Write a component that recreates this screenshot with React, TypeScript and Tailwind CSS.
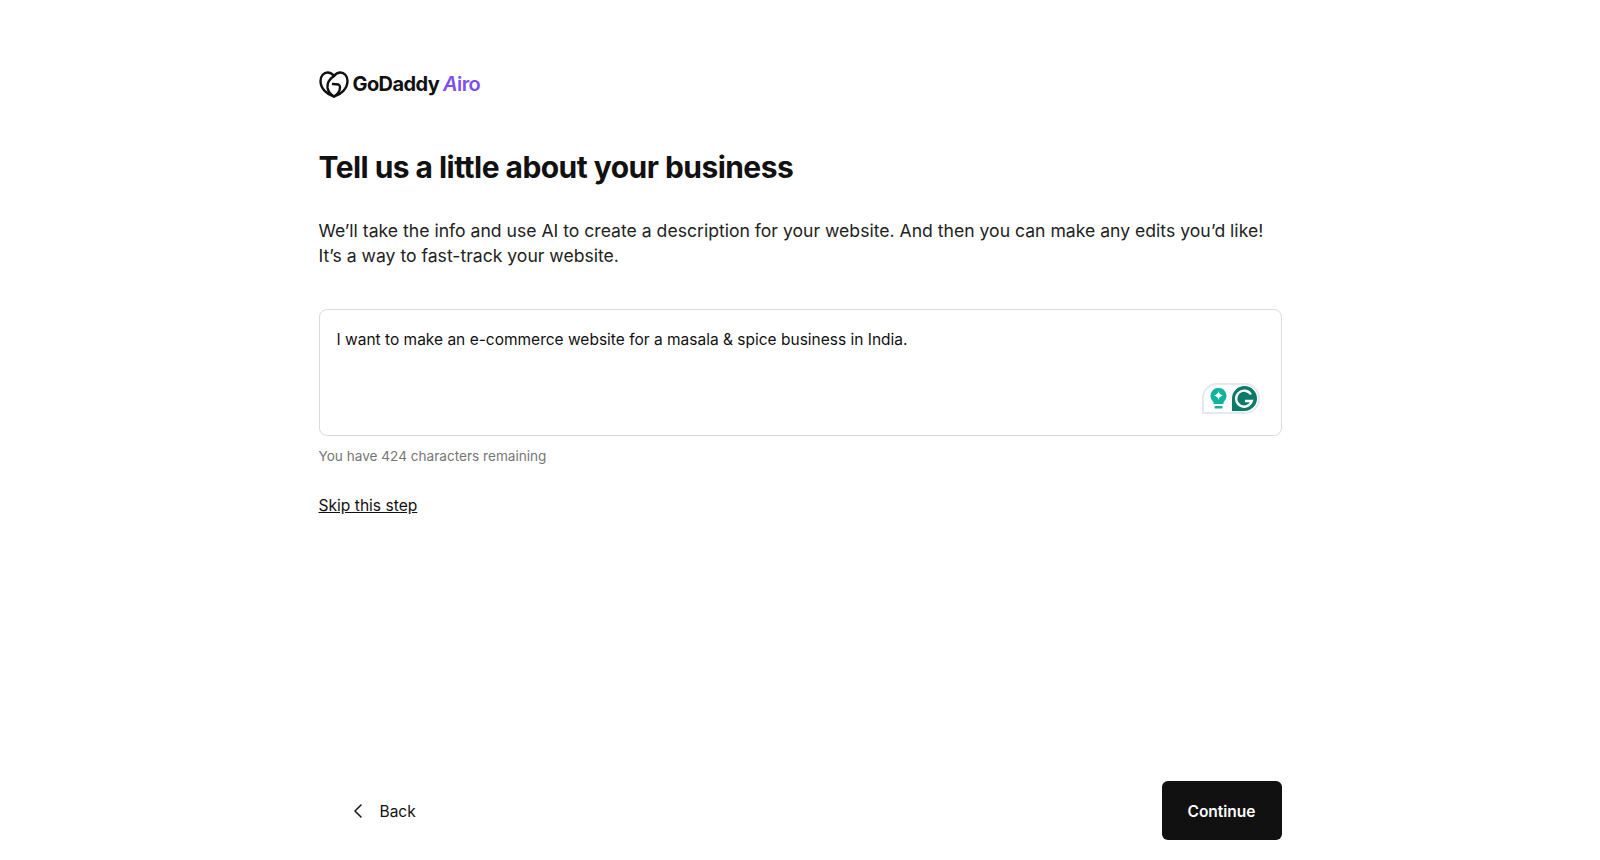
import { ChevronLeft } from "lucide-react";

function HeartLogo() {
  return (
    <svg width="30" height="27" viewBox="0 0 30 27" fill="none" stroke="#111" strokeWidth="2.4" strokeLinecap="round" strokeLinejoin="round">
      <path d="M15 25.5C8 23.5 1.5 17.5 1.5 10C1.5 4.5 5 1.5 8.5 1.5C11.5 1.5 13.5 3 15 5C16.5 3 18.5 1.5 21.5 1.5C25 1.5 28.5 4.5 28.5 10C28.5 17.5 22 23.5 15 25.5Z" />
      <path d="M15 5C10.5 8 8 12 8.5 16.5C9 20 11.5 23.5 15 25.5C18.5 23.5 21 20 21 16C21 15 20.5 14 19.5 13.5L14 13" />
    </svg>
  );
}

function GrammarlyBadge() {
  return (
    <div className="flex h-[31px] w-[58px] items-center justify-between rounded-[15px] rounded-bl-none border-2 border-[#e6e8f0] pl-[6px] pr-[1px]">
      <svg width="17" height="22" viewBox="0 0 16 22">
        <path d="M8 0a8 8 0 0 1 5 14.2V16H3v-1.8A8 8 0 0 1 8 0Z" fill="#10b39b" />
        <path d="M8 3c.5 2.600 1.400 3.500 4.500 4.500C9.400 8.500 8.500 9.400 8 12c-.5-2.600-1.400-3.500-4.500-4.500C6.600 6.500 7.500 5.600 8 3Z" fill="#fff" />
        <rect x="4" y="18" width="8" height="2.500" rx="1" fill="#10b39b" />
      </svg>
      <svg width="25" height="25" viewBox="0 0 25 25">
        <path d="M12.500 0a12.500 12.500 0 0 1 0 25H0V12.500A12.500 12.500 0 0 1 12.500 0Z" fill="#0b7a68" />
        <path d="M19 8.500a8 8 0 1 0 .8 6.500H13" fill="none" stroke="#fff" strokeWidth="2.400" />
      </svg>
    </div>
  );
}

export default function App() {
  return (
    <div className="flex h-[860px] justify-center bg-white font-['Inter',sans-serif] text-[#111]">
      <div className="flex w-[963px] flex-col">
        <div className="mt-[69px] flex items-center gap-[4px]">
          <HeartLogo />
          <span className="text-[20px] font-bold tracking-[-0.6px]">GoDaddy</span>
          <span className="text-[20px] font-semibold tracking-[-0.6px] text-[#7c4ff0]">
            <span className="italic">A</span>iro
          </span>
        </div>

        <h1 className="mt-[46px] text-[30px] font-bold leading-[44px] tracking-[-0.55px]">
          Tell us a little about your business
        </h1>

        <p className="mt-[29px] text-[17.6px] leading-[25px] text-[#222]">
          We’ll take the info and use AI to create a description for your website. And then you can make any edits you’d like!
          <br />
          It’s a way to fast-track your website.
        </p>

        <div className="relative mt-[41px] h-[127px] rounded-[8px] border border-[#d8dce2] px-[17px] pt-[20px] pb-[19px] text-[15.5px] leading-[20px]">
          I want to make an e-commerce website for a masala &amp; spice business in India.
          <div className="absolute right-[21px] bottom-[21px]">
            <GrammarlyBadge />
          </div>
        </div>

        <p className="mt-[10px] text-[13.6px] leading-[20px] text-[#767676]">You have 424 characters remaining</p>

        <a href="#" className="mt-[30px] self-start text-[15.6px] leading-[20px] underline">
          Skip this step
        </a>

        <div className="mt-auto mb-[20px] flex items-center justify-between">
          <button className="ml-[27px] flex items-center gap-[10px] text-[15.5px]">
            <ChevronLeft size={24} strokeWidth={1.5} />
            <span className="pt-[2px]">Back</span>
          </button>
          <button className="flex h-[59px] w-[120px] items-center justify-center rounded-[6px] bg-[#111] pt-[2px] text-[15.5px] font-semibold text-white">
            Continue
          </button>
        </div>
      </div>
    </div>
  );
}
